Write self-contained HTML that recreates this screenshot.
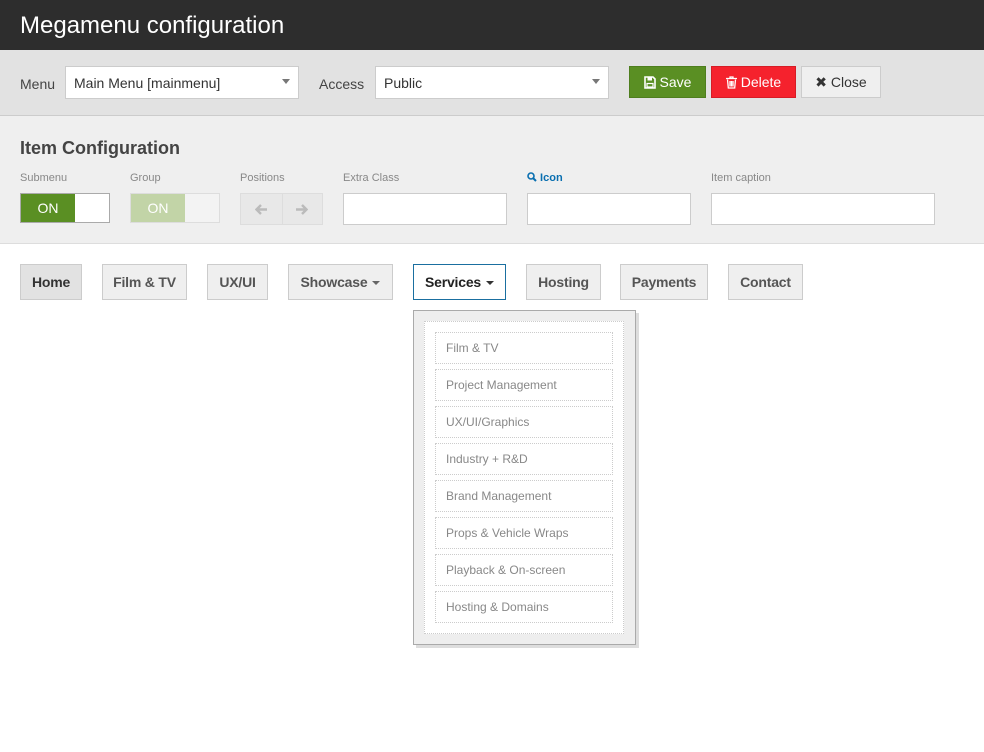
<!DOCTYPE html>
<html><head><style>
*{box-sizing:border-box;margin:0;padding:0}
body{width:984px;height:752px;background:#fff;font-family:"Liberation Sans",sans-serif;position:relative;overflow:hidden;color:#333}
.a{position:absolute}
.title{left:0;top:0;width:984px;height:50px;background:#2d2d2d;color:#fff;font-size:24px;padding:12px 20px}
.tb{left:0;top:50px;width:984px;height:66px;background:#e2e2e2;border-bottom:1px solid #ccc}
.cfg{left:0;top:116px;width:984px;height:128px;background:#efefef;border-bottom:1px solid #ddd}
.sel{background:#fff;border:1px solid #ccc;height:33px;font-size:14px;padding:8px 8px}
.sel:after{content:"";position:absolute;right:8px;top:12px;border:4px solid transparent;border-top:5px solid #777}
.lbl{font-size:14px;color:#444}
.btn{height:32px;font-size:14px;text-align:center;line-height:30px;border:1px solid}
.btn svg{vertical-align:-2px}
.sm{font-size:11px;color:#888}
.inp{background:#fff;border:1px solid #ccc;height:32px}
.nb{top:264px;height:36px;background:#efefef;border:1px solid #ccc;font-weight:bold;font-size:14px;color:#555;text-align:center;line-height:34px;letter-spacing:-0.2px}
.car{display:inline-block;border:4px solid transparent;border-top:4px solid #666;margin-left:5px;vertical-align:2px;border-bottom:0}
.it{left:435px;width:178px;height:32px;border:1px dotted #ccc;font-size:12px;color:#888;padding:8px 10px}
</style></head><body>
<div class="a title">Megamenu configuration</div>
<div class="a tb"></div>
<div class="a lbl" style="left:20px;top:76px">Menu</div>
<div class="a sel" style="left:65px;top:66px;width:234px">Main Menu [mainmenu]</div>
<div class="a lbl" style="left:319px;top:76px">Access</div>
<div class="a sel" style="left:375px;top:66px;width:234px">Public</div>
<div class="a btn" style="left:629px;top:66px;width:77px;background:#5a8f23;border-color:#4e7e1e;color:#fff"><svg width="12" height="13" viewBox="0 0 12 13"><path d="M1 1h8l2 2v9H1z" fill="none" stroke="#fff" stroke-width="1.6"/><rect x="3.5" y="1.5" width="4.5" height="3" fill="#fff"/><rect x="3" y="7.5" width="6" height="3.5" fill="none" stroke="#fff" stroke-width="1.2"/></svg> Save</div>
<div class="a btn" style="left:711px;top:66px;width:85px;background:#f5222d;border-color:#d61c26;color:#fff"><svg width="11" height="13" viewBox="0 0 11 13"><path d="M0 2.5h11M4 2.5V1h3v1.5M1.5 3.5l.8 8.5h6.4l.8-8.5M4 5v5.5M5.5 5v5.5M7 5v5.5" fill="none" stroke="#fff" stroke-width="1.3"/></svg> Delete</div>
<div class="a btn" style="left:801px;top:66px;width:80px;background:#efefef;border-color:#ccc;color:#333">&#10006; Close</div>
<div class="a cfg"></div>
<div class="a" style="left:20px;top:138px;font-size:18px;font-weight:bold;color:#444">Item Configuration</div>
<div class="a sm" style="left:20px;top:172px">Submenu</div>
<div class="a sm" style="left:130px;top:172px">Group</div>
<div class="a sm" style="left:240px;top:172px">Positions</div>
<div class="a sm" style="left:343px;top:172px">Extra Class</div>
<div class="a sm" style="left:527px;top:172px;color:#0a6fb0;font-weight:bold"><svg width="10" height="10" viewBox="0 0 10 10" style="vertical-align:-1px"><circle cx="4" cy="4" r="3" fill="none" stroke="#0a6fb0" stroke-width="1.6"/><path d="M6 6l3 3" stroke="#0a6fb0" stroke-width="2"/></svg> Icon</div>
<div class="a sm" style="left:711px;top:172px">Item caption</div>
<div class="a" style="left:20px;top:193px;width:90px;height:30px;border:1px solid #aaa;background:#fff"><div style="width:54px;height:28px;background:#5a8f23;color:#fff;font-size:14px;text-align:center;line-height:28px">ON</div></div>
<div class="a" style="left:130px;top:193px;width:90px;height:30px;border:1px solid #ddd;background:#f3f3f3"><div style="width:54px;height:28px;background:#c2d4a7;color:#fff;font-size:14px;text-align:center;line-height:28px">ON</div></div>
<div class="a" style="left:240px;top:193px;width:83px;height:32px;border:1px solid #ddd;background:#e8e8e8">
<svg style="position:absolute;left:14px;top:10px" width="12" height="11" viewBox="0 0 12 11"><path d="M6 1L1.5 5.5 6 10M2 5.5h10" fill="none" stroke="#bbb" stroke-width="2.4"/></svg>
<span style="position:absolute;left:41px;top:0;width:1px;height:30px;background:#ddd"></span>
<svg style="position:absolute;left:55px;top:10px" width="12" height="11" viewBox="0 0 12 11"><path d="M6 1l4.5 4.5L6 10M0 5.5h10" fill="none" stroke="#bbb" stroke-width="2.4"/></svg></div>
<div class="a inp" style="left:343px;top:193px;width:164px"></div>
<div class="a inp" style="left:527px;top:193px;width:164px"></div>
<div class="a inp" style="left:711px;top:193px;width:224px"></div>
<div class="a nb" style="left:20px;width:62px;background:#e2e2e2;color:#333">Home</div>
<div class="a nb" style="left:102px;width:85px">Film &amp; TV</div>
<div class="a nb" style="left:207px;width:61px">UX/UI</div>
<div class="a nb" style="left:288px;width:105px">Showcase<span class="car"></span></div>
<div class="a nb" style="left:413px;width:93px;background:#fff;border-color:#1a6fa0;color:#222">Services<span class="car" style="border-top-color:#333"></span></div>
<div class="a nb" style="left:526px;width:75px">Hosting</div>
<div class="a nb" style="left:620px;width:88px">Payments</div>
<div class="a nb" style="left:728px;width:75px">Contact</div>
<div class="a" style="left:413px;top:310px;width:223px;height:335px;background:#eee;border:1px solid #aaa;box-shadow:3px 3px 0 #ddd"></div>
<div class="a" style="left:424px;top:321px;width:200px;height:313px;background:#fff;border:1px dotted #ccc"></div>
<div class="a it" style="top:332px">Film &amp; TV</div>
<div class="a it" style="top:369px">Project Management</div>
<div class="a it" style="top:406px">UX/UI/Graphics</div>
<div class="a it" style="top:443px">Industry + R&amp;D</div>
<div class="a it" style="top:480px">Brand Management</div>
<div class="a it" style="top:517px">Props &amp; Vehicle Wraps</div>
<div class="a it" style="top:554px">Playback &amp; On-screen</div>
<div class="a it" style="top:591px">Hosting &amp; Domains</div>
</body></html>
